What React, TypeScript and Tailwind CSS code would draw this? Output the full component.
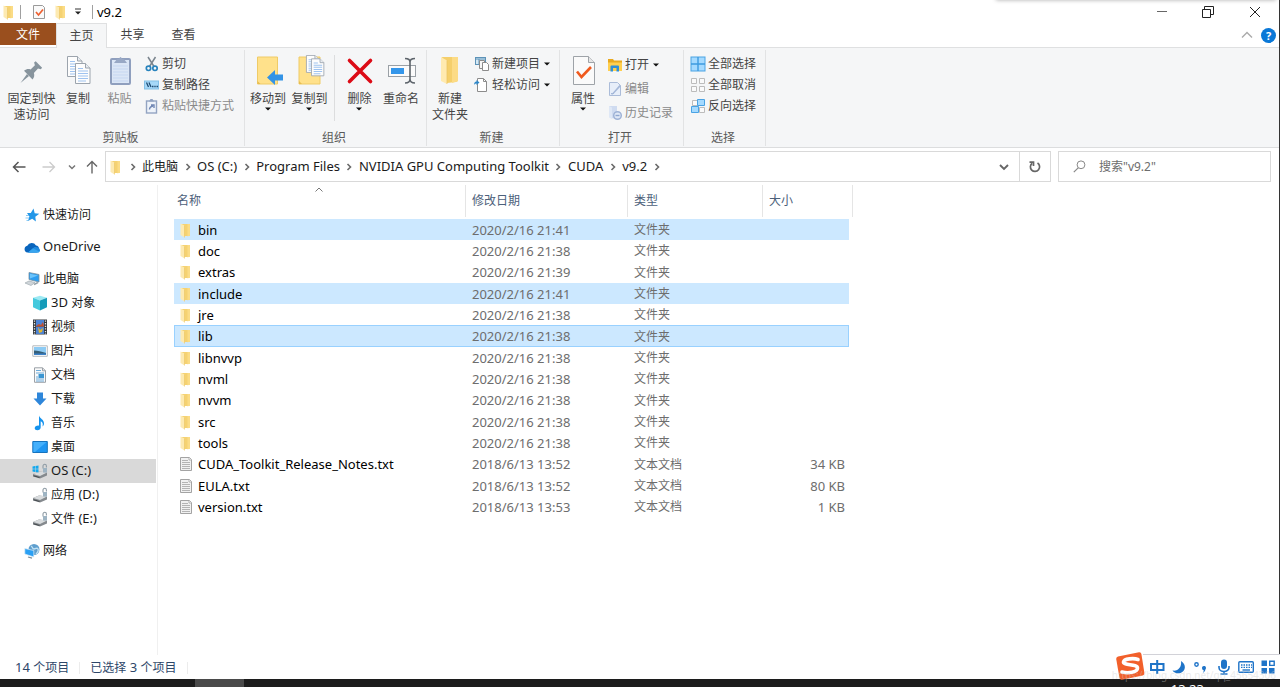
import React, { useState } from 'react';

type IconProps = { children: React.ReactNode; w?: number; h?: number; className?: string };

function Svg({ children, w = 16, h = 16, className = '' }: IconProps) {
  return (
    <svg width={w} height={h} viewBox={`0 0 ${w} ${h}`} fill="none" aria-hidden="true" className={`shrink-0 ${className}`}>
      {children}
    </svg>
  );
}

/* Latin runs are set one step larger than the Chinese characters beside them. */
function Mixed({ text }: { text: string }) {
  return (
    <>
      {text.split(/([\u4e00-\u9fff]+)/).filter(Boolean).map((run, i) =>
        /[\u4e00-\u9fff]/.test(run) ? run : <span key={i} className="text-[13px] whitespace-pre">{run}</span>,
      )}
    </>
  );
}

const FolderSmall = () => (
  <Svg>
    <path d="M4 2h9v11.500l-1 .5H7z" fill="#f5d272" />
    <path d="M10.500 2H13v11.500l-2.500 1z" fill="#fbdc86" />
    <path d="M3.500 1.500l4 2v12l-4-2.500z" fill="#fdeab2" />
    <path d="M7.500 3.500v12" stroke="#e9c262" strokeWidth=".6" />
  </Svg>
);

const TextFile = () => (
  <Svg>
    <path d="M3.500 1.500h9l2 2v11h-11z" fill="#f1f1f1" stroke="#a3a3a3" />
    <path d="M5 4.500h6M5 6.500h8M5 8.500h8M5 10.500h8M5 12.500h8" stroke="#b4b4b4" />
    <path d="M12 1.500v2.500h2.500" stroke="#a3a3a3" fill="#fff" strokeWidth=".8" />
  </Svg>
);

const Caret = () => (
  <Svg w={6} h={4}><path d="M0 .5h6L3 3.500z" fill="#111" /></Svg>
);

const Chevron = () => (
  <Svg w={6} h={8}><path d="M1.500 1l3 3-3 3" stroke="#6a6a6a" strokeWidth="1.600" /></Svg>
);

/* ---------- ribbon icons, 32px ---------- */
const PinIcon = () => (
  <Svg w={32} h={32}>
    <path d="M4.500 28l6.500-9 2 2z" fill="#87949d" />
    <path d="M8 15.700c2.300-1.700 4.300-2 6.600-1.300l4.300-4.200-.8-2.600 1.600-1.300 6.400 6.400-1.300 1.600-2.800-.7-4.100 4.300c.8 2.400.3 4.600-1.400 6.700z" fill="#87949d" />
  </Svg>
);
const page = (x: number, y: number) => (
  <g transform={`translate(${x} ${y})`}>
    <path d="M.5.5h10l4.500 4.500v15.500H.5z" fill="#fdfdfd" stroke="#9ca4ad" />
    <path d="M10.500.5v4.500H15" fill="#e9edf2" stroke="#9ca4ad" />
    <path d="M3 5.500h5M3 8h10M3 10.500h10M3 13h10M3 15.500h10M3 18h8" stroke="#9fc3f0" strokeWidth="1.200" />
  </g>
);
const CopyIcon = () => <Svg w={32} h={32}>{page(5, 1)}{page(13, 8)}</Svg>;
const PasteIcon = () => (
  <Svg w={32} h={32}>
    <rect x="7" y="4" width="19" height="25" rx="1" fill="#dbe6f6" stroke="#8f9fbe" strokeWidth="2" />
    <path d="M9 11h15M9 14h15M9 17h15M9 20h15M9 23h15M9 26h15" stroke="#c6d7f1" />
    <path d="M10 8l3-4h2q1.500-4 3 0h2l3 4z" fill="#98a8c5" />
  </Svg>
);
const MoveIcon = () => (
  <Svg w={32} h={32}>
    <path d="M5.500 2h20v27h-20z" fill="#ffe18b" stroke="#efcb67" />
    <path d="M5.500 26l3 3h-3z" fill="#e8bd50" />
    <path d="M15 22.500l8-7.500v4.500h8v6h-8v4.500z" fill="#3393e6" />
  </Svg>
);
const CopyToIcon = () => (
  <Svg w={32} h={32}>
    <path d="M5 2h21v27H5z" fill="#ffe18b" stroke="#efcb67" />
    <path d="M5 26l3 3H5z" fill="#e8bd50" />
    <g transform="translate(12 0) scale(.85)">{page(0, 0)}{page(6, 4)}</g>
  </Svg>
);
const DeleteIcon = () => (
  <Svg w={32} h={32}><path d="M5.500 5.500l21 21M26.500 5.500l-21 21" stroke="#dc0b16" strokeWidth="3.600" strokeLinecap="round" /></Svg>
);
const RenameIcon = () => (
  <Svg w={32} h={32}>
    <rect x="3.500" y="10.500" width="27" height="11" fill="#fbfbfb" stroke="#9aa0a6" />
    <rect x="6" y="13" width="13" height="6" fill="#3496ea" />
    <path d="M20 3.500c3 0 5 .5 5 3.500v17c0 3-2 4-5 4M30 3.500c-3 0-5 .5-5 3.500v17c0 3 2 4 5 4" stroke="#5d646b" strokeWidth="1.600" />
  </Svg>
);
const NewFolderIcon = () => (
  <Svg w={32} h={32}>
    <path d="M8 2h16v24l-2 1-9 1z" fill="#f5cf6b" />
    <path d="M18 2h6v24l-6 2z" fill="#fcdb85" />
    <path d="M7 2l6 3.500V29l-6-3z" fill="#ffeab0" />
    <path d="M13 5.500V29" stroke="#e9c260" strokeWidth=".7" />
  </Svg>
);
const PropertiesIcon = () => (
  <Svg w={32} h={32}>
    <path d="M6.500 1.500h15l6 6v22h-21z" fill="#fafafa" stroke="#9ea3a8" />
    <path d="M21.500 1.500v6h6" fill="#e6e6e6" stroke="#9ea3a8" />
    <path d="M10 16.500l4.500 5.500L24 12" stroke="#f05a1e" strokeWidth="2.600" />
  </Svg>
);

/* ---------- ribbon icons, 16px ---------- */
const CutIcon = () => (
  <Svg>
    <path d="M4 1l6 9.500M11.500 1l-6 9.500" stroke="#7b858e" strokeWidth="1.500" />
    <circle cx="4.500" cy="12.300" r="2.200" stroke="#2883bd" strokeWidth="1.700" />
    <circle cx="11" cy="12.300" r="2.200" stroke="#2883bd" strokeWidth="1.700" />
  </Svg>
);
const CopyPathIcon = () => (
  <Svg>
    <rect x=".5" y="4" width="14" height="8" fill="#a6d8f8" stroke="#83bfe6" />
    <path d="M2.500 5.500l2 4.500M5 5.500L7 10M8 9.500h1.500M10.300 9.500h1.400M12.500 9.500h1.500" stroke="#1f4c73" strokeWidth="1.300" />
  </Svg>
);
const PasteShortcutIcon = () => (
  <Svg>
    <rect x="2.500" y="3" width="10" height="12" fill="#eef3fa" stroke="#93a4c2" strokeWidth="1.400" />
    <path d="M5 3.500L6.500 1h2L10 3.500z" fill="#93a4c2" />
    <path d="M5.500 11.500c0-2 1-3 3.500-3.500M7 7h3v3" stroke="#7087b4" strokeWidth="1.400" />
  </Svg>
);
const NewItemIcon = () => (
  <Svg>
    <rect x="1.500" y="1.500" width="10" height="7" fill="#d5e9f5" stroke="#5d93b8" />
    <path d="M1 3h10M5 3v5" stroke="#5d93b8" />
    <path d="M5.500 4.500h5v8h-5z" fill="#f7f7f7" stroke="#8c8c8c" />
    <path d="M8.500 6.500h4l2 2v6h-6z" fill="#fff" stroke="#8c8c8c" />
  </Svg>
);
const EasyAccessIcon = () => (
  <Svg>
    <path d="M3.500 1.500h6l3 3v10h-9z" fill="#fff" stroke="#8c8c8c" />
    <path d="M9.500 1.500v3h3" stroke="#8c8c8c" />
    <path d="M0 8c.2-2.500 1-3.500 2.500-3.500V3l3 2.500-3 2.500V6.500C1.500 6.500.7 7 0 8z" fill="#2f87c8" />
  </Svg>
);
const OpenIcon = () => (
  <Svg>
    <path d="M1 2h5l1 1.500h8V13H1z" fill="#e9a91f" />
    <path d="M1 5.500h14V14H1z" fill="#ffcf4f" />
    <path d="M3.500 14.500V9.500q0-1 1-1h6.500q1 0 1 1v5H9.500v-3.500H6v3.500z" fill="#2f8fd8" />
  </Svg>
);
const EditIcon = () => (
  <Svg>
    <path d="M2.500 1.500h8l3 3v10h-11z" fill="#e7eef9" stroke="#abbcd9" />
    <path d="M12.500 4L6 11.500l-2 3 3-2L14 5z" fill="#a4b7d8" />
    <path d="M4 12.500h3" stroke="#a4b7d8" />
  </Svg>
);
const HistoryIcon = () => (
  <Svg>
    <path d="M2 1h8v13l-6-1z" fill="#cfdbf0" />
    <path d="M2 1l3 1.500V14l-3-1.500z" fill="#dfe8f6" />
    <circle cx="10.500" cy="10.500" r="3.800" fill="#dfe8f6" stroke="#9fb3d6" strokeWidth="1.500" />
    <path d="M8.500 10.500h4" stroke="#8fa7d0" strokeWidth="1.400" />
  </Svg>
);
const SelectAllIcon = () => (
  <Svg>
    <rect x="1" y="1" width="14" height="14" fill="#a5daff" stroke="#4aa3e4" />
    <path d="M8 1v14M1 8h14" stroke="#3d9be0" strokeWidth="1.400" />
  </Svg>
);
const SelectNoneIcon = () => (
  <Svg>
    <path d="M1.500 1.500h5v5h-5zM9.500 1.500h5v5h-5zM1.500 9.500h5v5h-5zM9.500 9.500h5v5h-5z" fill="#fafafa" stroke="#bcbcbc" />
  </Svg>
);
const InvertIcon = () => (
  <Svg>
    <path d="M2.500 2.500h5v5h-5zM9.500 9.500h5v5h-5z" fill="#fafafa" stroke="#bcbcbc" />
    <path d="M7.500 1.500h7v6h-7zM1.500 8.500h7v6h-7z" fill="#a5daff" stroke="#4aa3e4" />
  </Svg>
);

/* ---------- navigation pane icons ---------- */
const StarIcon = () => (
  <Svg>
    <path d="M9.500 1.500l1.200 4.700 4.600.6-4 2.900.6 4.800-3.700-2.800L4 14l1.400-4.500L3 6l3.800.1z" fill="#2397e8" />
    <path d="M2 8.500h3M1.500 11H5M2.500 13.500h2" stroke="#6dbbf0" strokeWidth=".8" />
  </Svg>
);
const CloudIcon = () => (
  <Svg>
    <path d="M3.500 13.500a3.400 3.400 0 0 1-.2-6.700A5 5 0 0 1 12 6.500a3.600 3.600 0 0 1 .5 7z" fill="#0a65bd" />
    <path d="M4 13.500L10.500 8c2.500-.5 5.500.8 5.500 3.200 0 1.500-1.200 2.300-2.500 2.300z" fill="#1f8be0" />
    <path d="M4 13.500l5-4.200 6.500 3.400c-.5.600-1.300.8-2 .8z" fill="#37a5ef" />
  </Svg>
);
const PcIcon = () => (
  <Svg>
    <path d="M5 1.500l10 2v7.500l-10-2.500z" fill="#2c9df0" stroke="#78919f" strokeWidth=".8" />
    <path d="M6 2.700l8 1.700-8 3z" fill="#6cc4fb" />
    <path d="M1 12l4-2 6 1.500-4 3z" fill="#cfd5d9" stroke="#a4adb3" strokeWidth=".7" />
    <path d="M10 13.500l4-2" stroke="#9aa4aa" strokeWidth="1.500" />
  </Svg>
);
const CubeIcon = () => (
  <Svg>
    <path d="M1 2.800l7-2 7 2-7 2.700z" fill="#9ce9f3" />
    <path d="M1 2.800l7 2.700v10l-7-3.200z" fill="#45c9dd" />
    <path d="M8 5.500l7-2.700v9.500l-7 3.200z" fill="#159bb9" />
  </Svg>
);
const VideoIcon = () => (
  <Svg>
    <path d="M1 .5h14v15H1z" fill="#34383d" />
    <path d="M4 1h8v6.500H4zM4 8h8v7H4z" fill="#4c83d5" />
    <path d="M4 7l3-2 2 1 2-3 1 4.500H4z" fill="#c5502c" />
    <path d="M6 8l2 3 3-2-1 4-3 1z" fill="#e0b732" />
    <path d="M2.500 1.500v14M13.500 1.500v14" stroke="#e4e7ea" strokeWidth="1.300" strokeDasharray="1.300 1.300" />
  </Svg>
);
const PictureIcon = () => (
  <Svg>
    <path d="M.8 2.800h14.500v10.500H.8z" fill="#fff" stroke="#b4b9bd" />
    <path d="M2 4h12v8H2z" fill="#8dcbf4" />
    <path d="M2 7.500c4 0 7 1 12 2.500v2H2z" fill="#355f78" />
    <path d="M2 10.500h12V12H2z" fill="#3b81c9" />
  </Svg>
);
const DocumentIcon = () => (
  <Svg>
    <path d="M2.500.8h8l3 3v11.500h-11z" fill="#fafafa" stroke="#9ba1a7" />
    <path d="M10.500.8v3h3" stroke="#9ba1a7" />
    <path d="M4 3.500h5M4 6h8M4 10h2M4 12h8M4 14h8" stroke="#5ba2d6" strokeWidth=".9" />
    <path d="M6.500 7h5.500v4H6.500z" fill="#3b96d2" />
  </Svg>
);
const DownloadIcon = () => (
  <Svg><path d="M5 1.500h6v6h3.500L8 14.500 1.500 7.500H5z" fill="#2e86da" /></Svg>
);
const MusicIcon = () => (
  <Svg>
    <path d="M7 .5c.5 3 5.500 4 5 8.500-.2 1.300-.8 2-1.500 2.500.8-3 0-4.500-1.800-5.300v6c0 1.700-1.500 3-3.300 3-1.600 0-2.700-.8-2.700-2 0-1.700 2.300-3 4.300-2.500z" fill="#1593ee" />
  </Svg>
);
const DesktopIcon = () => (
  <Svg>
    <path d="M.8 2.500h14.500v11H.8z" fill="#1f96f2" stroke="#1673bd" />
    <path d="M1.500 3h13L3 13H1.500z" fill="#45b0fb" />
  </Svg>
);
const DriveBase = () => (
  <>
    <path d="M1 11l6-2.500 8 1v3l-7 3-7-2z" fill="#858a8e" />
    <path d="M1 11l6-2.500 8 1L8 13z" fill="#d9dcde" />
    <path d="M1.500 12.300l6 1.700v1l-6-1.800z" fill="#43484c" />
    <path d="M11 5.500V3a1.700 1.700 0 0 1 3.400 0v1.500" stroke="#8e9ba4" strokeWidth="1.100" />
    <rect x="11" y="5" width="4" height="4.500" fill="#9eb4c3" />
  </>
);
const DriveIcon = () => <Svg><DriveBase /></Svg>;
const SystemDriveIcon = () => (
  <Svg>
    <DriveBase />
    <path d="M.5 3.500l2.500-.4v2.700H.5zM3.500 3l3-.5v3.300h-3zM.5 6.300H3V9l-2.500-.4zM3.500 6.300h3v3.300l-3-.5z" fill="#12a8ee" />
  </Svg>
);
const NetworkIcon = () => (
  <Svg>
    <circle cx="10" cy="6.500" r="5.500" fill="#5f9fce" />
    <path d="M7 3c2 1 1 3 3 3s3-2 4 0-1 4-2 5" stroke="#c1e1f3" strokeWidth="1.300" />
    <path d="M.8 5.500l9 2v6.500l-9-3z" fill="#2aa0f4" stroke="#e0edf5" strokeWidth=".7" />
    <path d="M4 14l4 1.200" stroke="#7d8c96" strokeWidth="1.300" />
  </Svg>
);

/* ---------- ribbon pieces ---------- */
function Big({ icon, lines, caret, dim, width }: { icon: React.ReactNode; lines: string[]; caret?: boolean; dim?: boolean; width: string }) {
  return (
    <button type="button" disabled={dim} className={`flex flex-col items-center gap-1 self-start ${width} ${dim ? 'text-[#8a8a8a]' : 'text-[#444]'}`}>
      {icon}
      <span className="flex flex-col items-center leading-4 whitespace-nowrap">
        {lines.map((l) => <span key={l}>{l}</span>)}
        {caret && <Caret />}
      </span>
    </button>
  );
}

function Small({ icon, label, caret, dim }: { icon: React.ReactNode; label: string; caret?: boolean; dim?: boolean }) {
  return (
    <button type="button" disabled={dim} className={`flex items-center gap-0.5 leading-4 whitespace-nowrap ${dim ? 'text-[#8a8a8a]' : 'text-[#444]'}`}>
      {icon}
      <span>{label}</span>
      {caret && <span className="pl-0.5"><Caret /></span>}
    </button>
  );
}

function Group({ label, width, children }: { label: string; width: string; children: React.ReactNode }) {
  return (
    <section aria-label={label} className={`flex flex-col justify-between border-r border-[#e2e3e4] ${width}`}>
      <div className="flex">{children}</div>
      <div className="pr-[3px] text-center leading-4 text-[#5a5a5a]">{label}</div>
    </section>
  );
}

/* ---------- data ---------- */
type Entry = { name: string; date: string; size?: string };
const entries: Entry[] = [
  { name: 'bin', date: '2020/2/16 21:41' },
  { name: 'doc', date: '2020/2/16 21:38' },
  { name: 'extras', date: '2020/2/16 21:39' },
  { name: 'include', date: '2020/2/16 21:41' },
  { name: 'jre', date: '2020/2/16 21:38' },
  { name: 'lib', date: '2020/2/16 21:38' },
  { name: 'libnvvp', date: '2020/2/16 21:38' },
  { name: 'nvml', date: '2020/2/16 21:38' },
  { name: 'nvvm', date: '2020/2/16 21:38' },
  { name: 'src', date: '2020/2/16 21:38' },
  { name: 'tools', date: '2020/2/16 21:38' },
  { name: 'CUDA_Toolkit_Release_Notes.txt', date: '2018/6/13 13:52', size: '34 KB' },
  { name: 'EULA.txt', date: '2018/6/13 13:52', size: '80 KB' },
  { name: 'version.txt', date: '2018/6/13 13:53', size: '1 KB' },
];

const crumbs = ['此电脑', 'OS (C:)', 'Program Files', 'NVIDIA GPU Computing Toolkit', 'CUDA', 'v9.2'];

const pcItems: [string, React.ReactNode][] = [
  ['3D 对象', <CubeIcon />],
  ['视频', <VideoIcon />],
  ['图片', <PictureIcon />],
  ['文档', <DocumentIcon />],
  ['下载', <DownloadIcon />],
  ['音乐', <MusicIcon />],
  ['桌面', <DesktopIcon />],
  ['OS (C:)', <SystemDriveIcon />],
  ['应用 (D:)', <DriveIcon />],
  ['文件 (E:)', <DriveIcon />],
];

function NavItem({ label, icon, nested, active }: { label: string; icon: React.ReactNode; nested?: boolean; active?: boolean }) {
  return (
    <a href="#" className={`flex h-6 items-center gap-[3px] text-[#1a1a1a] ${nested ? 'pl-8' : 'pl-6'} ${active ? 'bg-[#d9d9d9]' : ''}`}>
      {icon}
      <span><Mixed text={label} /></span>
    </a>
  );
}

function TitleBar() {
  return (
    <header className="flex h-[23px] items-center">
      <FolderSmall />
      <span className="ml-1 h-3.5 w-px bg-[#a0a0a0]" />
      <button type="button" aria-label="属性" className="ml-2.5">
        <Svg>
          <path d="M2.500 1.500h9l2 2v11h-11z" fill="#fafafa" stroke="#9a9a9a" />
          <path d="M5 8l2.500 3L12 5.500" stroke="#ee6030" strokeWidth="1.700" />
        </Svg>
      </button>
      <button type="button" aria-label="新建文件夹" className="ml-[5px]"><FolderSmall /></button>
      <button type="button" aria-label="自定义快速访问工具栏" className="ml-1.5">
        <Svg w={8} h={8}><path d="M1 1h6" stroke="#333" /><path d="M1 3.500h6L4 6.500z" fill="#222" /></Svg>
      </button>
      <span className="ml-2.5 h-3.5 w-px bg-[#a0a0a0]" />
      <h1 className="ml-1 text-[13px] leading-4 text-black">v9.2</h1>
      <div className="ml-auto flex h-full">
        <button type="button" aria-label="最小化" className="flex w-[46px] items-center justify-center">
          <Svg w={12} h={12}><path d="M1 5.500h10" stroke="#666" /></Svg>
        </button>
        <button type="button" aria-label="还原" className="flex w-[46px] items-center justify-center">
          <Svg w={12} h={12}><path d="M.5 3.500h8v8h-8zM2.500 3V.5h9v8H9" stroke="#222" /></Svg>
        </button>
        <button type="button" aria-label="关闭" className="flex w-12 items-center justify-center">
          <Svg w={12} h={12}><path d="M1 1l10 10M11 1L1 11" stroke="#222" /></Svg>
        </button>
      </div>
    </header>
  );
}

function Tabs() {
  return (
    <nav className="flex h-[25px] border-b border-[#dfe0e1] text-[#444]">
      <button type="button" className="h-[22px] w-14 bg-[#9a4f1e] pt-0.5 text-white">文件</button>
      <button type="button" className="-mb-px w-[51px] border-x border-t border-[#dfe0e1] bg-[#f5f6f7]">主页</button>
      <button type="button" className="w-[51px]">共享</button>
      <button type="button" className="w-[51px]">查看</button>
      <div className="ml-auto flex items-center gap-2 pr-[3px]">
        <button type="button" aria-label="最小化功能区">
          <Svg w={12} h={8}><path d="M1 6.500l5-5 5 5" stroke="#aaa" strokeWidth="1.400" /></Svg>
        </button>
        <button type="button" aria-label="帮助" className="size-[15px] rounded-full bg-[#0a78d7] text-[11px] leading-[15px] font-bold text-white">?</button>
      </div>
    </nav>
  );
}

function Ribbon() {
  return (
    <div className="flex h-[100px] border-b border-[#dcddde] bg-[#f5f6f7] pt-0.5 pb-px">
      <Group label="剪贴板" width="w-[245px]">
        <div className="flex pt-[5px] pl-1.5">
          <Big icon={<PinIcon />} lines={['固定到快', '速访问']} width="w-[51px]" />
          <Big icon={<CopyIcon />} lines={['复制']} width="w-[42px]" />
          <Big icon={<PasteIcon />} lines={['粘贴']} width="w-[41px]" dim />
        </div>
        <div className="flex flex-col gap-[5px] pt-1.5 pl-1">
          <Small icon={<CutIcon />} label="剪切" />
          <Small icon={<CopyPathIcon />} label="复制路径" />
          <Small icon={<PasteShortcutIcon />} label="粘贴快捷方式" dim />
        </div>
      </Group>
      <Group label="组织" width="w-[182px]">
        <div className="flex pt-[5px] pl-0.5">
          <Big icon={<MoveIcon />} lines={['移动到']} width="w-[42px]" caret />
          <Big icon={<CopyToIcon />} lines={['复制到']} width="w-[41px]" caret />
        </div>
        <div className="mx-1 mt-[5px] h-[66px] w-px bg-[#dcddde]" />
        <div className="flex pt-[5px]">
          <Big icon={<DeleteIcon />} lines={['删除']} width="w-[41px]" caret />
          <Big icon={<RenameIcon />} lines={['重命名']} width="w-[42px]" />
        </div>
      </Group>
      <Group label="新建" width="w-[133px]">
        <div className="flex pt-[5px] pl-0.5">
          <Big icon={<NewFolderIcon />} lines={['新建', '文件夹']} width="w-[42px]" />
        </div>
        <div className="flex flex-col gap-[5px] pt-1.5 pl-[3px]">
          <Small icon={<NewItemIcon />} label="新建项目" caret />
          <Small icon={<EasyAccessIcon />} label="轻松访问" caret />
        </div>
      </Group>
      <Group label="打开" width="w-[124px]">
        <div className="flex pt-[5px] pl-0.5">
          <Big icon={<PropertiesIcon />} lines={['属性']} width="w-[42px]" caret />
        </div>
        <div className="flex flex-col gap-2 pt-[7px] pl-[3px]">
          <Small icon={<OpenIcon />} label="打开" caret />
          <Small icon={<EditIcon />} label="编辑" dim />
          <Small icon={<HistoryIcon />} label="历史记录" dim />
        </div>
      </Group>
      <Group label="选择" width="w-[82px]">
        <div className="flex flex-col gap-[5px] pt-1.5 pl-1.5">
          <Small icon={<SelectAllIcon />} label="全部选择" />
          <Small icon={<SelectNoneIcon />} label="全部取消" />
          <Small icon={<InvertIcon />} label="反向选择" />
        </div>
      </Group>
    </div>
  );
}

function AddressRow() {
  return (
    <div className="flex items-center pt-[3px] pr-2">
      <div className="flex w-[105px] items-center pl-3">
        <button type="button" aria-label="后退"><Svg w={14} h={12}><path d="M13.500 6H1.500M6.500 1l-5 5 5 5" stroke="#555" strokeWidth="1.500" /></Svg></button>
        <button type="button" aria-label="前进" disabled className="ml-4"><Svg w={14} h={12}><path d="M.5 6h12M7.500 1l5 5-5 5" stroke="#ccc" strokeWidth="1.300" /></Svg></button>
        <button type="button" aria-label="最近浏览的位置" className="ml-3"><Svg w={8} h={6}><path d="M1 1.500l3 3 3-3" stroke="#777" strokeWidth="1.500" /></Svg></button>
        <button type="button" aria-label="上移" className="ml-2.5"><Svg w={12} h={14}><path d="M6 13.500v-12M1 6.500l5-5 5 5" stroke="#666" strokeWidth="1.400" /></Svg></button>
      </div>
      <div className="flex h-[31px] flex-1 border border-[#d9d9d9]">
        <div className="flex flex-1 items-center pl-px">
          <FolderSmall />
          <span className="flex w-[19px] justify-center"><Chevron /></span>
          {crumbs.map((c) => (
            <React.Fragment key={c}>
              <a href="#" className="leading-4 whitespace-nowrap text-[#1a1a1a]"><Mixed text={c} /></a>
              <span className="flex w-[19px] justify-center"><Chevron /></span>
            </React.Fragment>
          ))}
        </div>
        <button type="button" aria-label="以前的位置" className="flex w-[30px] items-center justify-center">
          <Svg w={10} h={8}><path d="M1 2l4 4 4-4" stroke="#666" strokeWidth="1.900" /></Svg>
        </button>
        <button type="button" aria-label="刷新" className="flex w-[31px] items-center justify-center border-l border-[#d9d9d9]">
          <Svg w={12} h={12}>
            <path d="M8.500 2A4.600 4.600 0 1 1 3.200 2.200" stroke="#666" strokeWidth="1.700" />
            <path d="M4.500 5V1.200h-4" stroke="#666" strokeWidth="1.700" />
          </Svg>
        </button>
      </div>
      <label className="ml-[7px] flex h-[31px] w-[213px] items-center border border-[#d9d9d9] pl-3.5">
        <Svg w={13} h={13}><circle cx="8" cy="4.800" r="3.900" stroke="#888" /><path d="M5.200 7.800L.8 12.200" stroke="#888" strokeWidth="1.200" /></Svg>
        <input type="search" aria-label="搜索" placeholder={'搜索"v9.2"'} className="ml-[13px] min-w-0 flex-1 bg-transparent outline-none placeholder:text-[#6d6d6d]" />
      </label>
    </div>
  );
}

function FileTable({ selected, focused, onSelect }: { selected: string[]; focused: string; onSelect: (n: string) => void }) {
  const heads = ['名称', '修改日期', '类型', '大小'];
  return (
    <table className="w-[679px] table-fixed border-separate border-spacing-0 text-left">
      <colgroup>
        <col className="w-[292px]" /><col className="w-[162px]" /><col className="w-[135px]" /><col className="w-[86px]" /><col className="w-1" />
      </colgroup>
      <thead>
        <tr>
          {heads.map((h, i) => (
            <th key={h} colSpan={i === 3 ? 2 : 1} className={`h-8 border-r border-[#e5e5e5] p-0 font-normal text-[#4c607a] ${i === 0 ? 'pl-[3px]' : 'pl-1.5'}`}>
              <button type="button" className="relative w-full text-left leading-4">
                {h}
                {i === 0 && (
                  <span className="absolute -top-1.5 left-[48%]"><Svg w={8} h={5}><path d="M.5 4.500L4 1l3.500 3.500" stroke="#777" /></Svg></span>
                )}
              </button>
            </th>
          ))}
        </tr>
      </thead>
      <tbody className="before:block before:h-0.5 before:content-['']">
        {entries.map((e) => {
          const on = selected.includes(e.name);
          const tone = e.name === focused ? 'bg-[#cce8ff] border-[#99d1ff]' : on ? 'bg-[#cce8ff] border-[#cce8ff]' : 'border-transparent';
          const cell = `border-y p-0 text-[13px] leading-4 ${tone}`;
          return (
            <tr key={e.name} aria-selected={on} onClick={() => onSelect(e.name)} className="h-[21px] nth-[3n]:h-[22px]">
              <td className={`${cell} border-l text-black`}>
                <span className="flex items-center gap-[5px] pl-0.5">{e.size ? <TextFile /> : <FolderSmall />}{e.name}</span>
              </td>
              <td className={`${cell} pl-1.5 text-[#6d6d6d]`}>{e.date}</td>
              <td className={`${cell} pl-1.5 text-[#6d6d6d]`}><span className="text-xs leading-4">{e.size ? '文本文档' : '文件夹'}</span></td>
              <td className={`${cell} border-r pr-[3px] text-right text-[#6d6d6d]`}>{e.size}</td>
              <td className="p-0" />
            </tr>
          );
        })}
      </tbody>
    </table>
  );
}

function InputToolbar() {
  return (
    <div className="absolute right-0 bottom-2 flex h-[25px] w-[137px] items-center justify-between border-t border-[#d2d2d8] bg-white pr-1 pl-1.5">
      <div className="absolute -top-1 -left-7">
        <Svg w={30} h={30}>
          <path d="M3 5.500L24 1.300q2-.3 2.400 1.700l3 19q.2 2-1.700 2.500L7 28.800q-2 .3-2.500-1.700L1.200 8Q1 6 3 5.500z" fill="#f2602b" />
          <path d="M23 8.500c-4-1.500-14-1-14.500 2.500-.4 3.500 14 2 14 6 0 4.500-9.500 5.500-15.500 4" stroke="#fff" strokeWidth="3.600" strokeLinecap="round" />
        </Svg>
      </div>
      <button type="button" aria-label="中文输入">
        <Svg><path d="M2 5h12.500v6H2zM8.200 1v14" stroke="#1f74c8" strokeWidth="2" /></Svg>
      </button>
      <button type="button" aria-label="半角">
        <Svg><path d="M10 2c5.500 3.500 5 10-.5 12-3 .9-6.500 0-8-2.500C7 12.500 11 8 10 2z" fill="#1f74c8" /></Svg>
      </button>
      <button type="button" aria-label="标点">
        <Svg><circle cx="3.500" cy="5.500" r="1.700" stroke="#1f74c8" strokeWidth="1.400" /><path d="M9 9a2 2 0 1 1 3.500 1.300c-.3 1.800-1.300 3-2.700 3.700.7-1 1-2 .9-2.800A2 2 0 0 1 9 9z" fill="#1f74c8" /></Svg>
      </button>
      <button type="button" aria-label="语音">
        <Svg><rect x="5" y=".5" width="6" height="9.500" rx="3" fill="#1f74c8" /><path d="M3 7v1.500a5 4 0 0 0 10 0V7M8 12v3M4.500 15h7" stroke="#1f74c8" strokeWidth="1.600" /></Svg>
      </button>
      <button type="button" aria-label="软键盘">
        <Svg><rect x=".8" y="2.800" width="14.500" height="10.500" rx="1" stroke="#1f74c8" strokeWidth="1.400" /><path d="M3 6h11M3 8.300h11" stroke="#1f74c8" strokeWidth="1.300" strokeDasharray="1.500 1" /><path d="M4.500 11h7.500" stroke="#1f74c8" strokeWidth="1.400" /></Svg>
      </button>
      <button type="button" aria-label="工具箱">
        <Svg><path d="M1.500 1.500h5.500V7H1.500zM1.500 9H7v5.500H1.500zM9 9h5.500v5.500H9z" fill="#1f74c8" /><path d="M9.700 2.200h4.500v4.200H9.700z" stroke="#1f74c8" strokeWidth="1.400" /></Svg>
      </button>
    </div>
  );
}

export default function App() {
  const [selected, setSelected] = useState(['bin', 'include', 'lib']);
  const [focused, setFocused] = useState('lib');
  const pick = (name: string) => {
    setSelected([name]);
    setFocused(name);
  };
  return (
    <div className="relative flex min-h-screen flex-col overflow-hidden bg-white font-['Noto_Sans','Noto_Sans_CJK_SC',sans-serif] text-xs">
      <div className="absolute -top-2 right-1 h-2 w-[280px] shadow-[0_0_4px_#aaa]" />
      <div className="flex flex-1 flex-col border-r border-[#333]">
        <TitleBar />
        <Tabs />
        <Ribbon />
        <AddressRow />
        <div className="flex flex-1 pt-[3px]">
          <aside className="w-[158px] border-r border-[#f0f0f0] pr-px">
            <nav className="flex flex-col gap-2 pt-[18px]">
              <NavItem label="快速访问" icon={<StarIcon />} />
              <NavItem label="OneDrive" icon={<CloudIcon />} />
              <div>
                <NavItem label="此电脑" icon={<PcIcon />} />
                {pcItems.map(([label, icon]) => (
                  <NavItem key={label} label={label} icon={icon} nested active={label === 'OS (C:)'} />
                ))}
              </div>
              <NavItem label="网络" icon={<NetworkIcon />} />
            </nav>
          </aside>
          <main className="flex-1 pl-4">
            <FileTable selected={selected} focused={focused} onSelect={pick} />
          </main>
        </div>
        <footer className="flex h-6 items-center pt-0.5 pl-[15px] text-[#2d4668]">
          <span><Mixed text={`${entries.length} 个项目`} /></span>
          <span className="mx-2.5 h-3 w-px bg-[#ececec]" />
          <span><Mixed text={`已选择 ${selected.length} 个项目`} /></span>
          <span className="mx-2.5 h-3 w-px bg-[#ececec]" />
        </footer>
      </div>
      <div className="flex h-2 overflow-hidden bg-[#1c1c1c]">
        <div className="ml-[195px] w-[49px] bg-[#4a4a4a]" />
        <time className="mr-[76px] ml-auto pt-0.5 text-[13px] leading-4 text-white">13:23</time>
      </div>
      <InputToolbar />
      <div className="pointer-events-none absolute right-1 bottom-1 text-[10px] leading-4 text-[#ccc]/40">https://blog.csdn.net/qq_45654306</div>
    </div>
  );
}
